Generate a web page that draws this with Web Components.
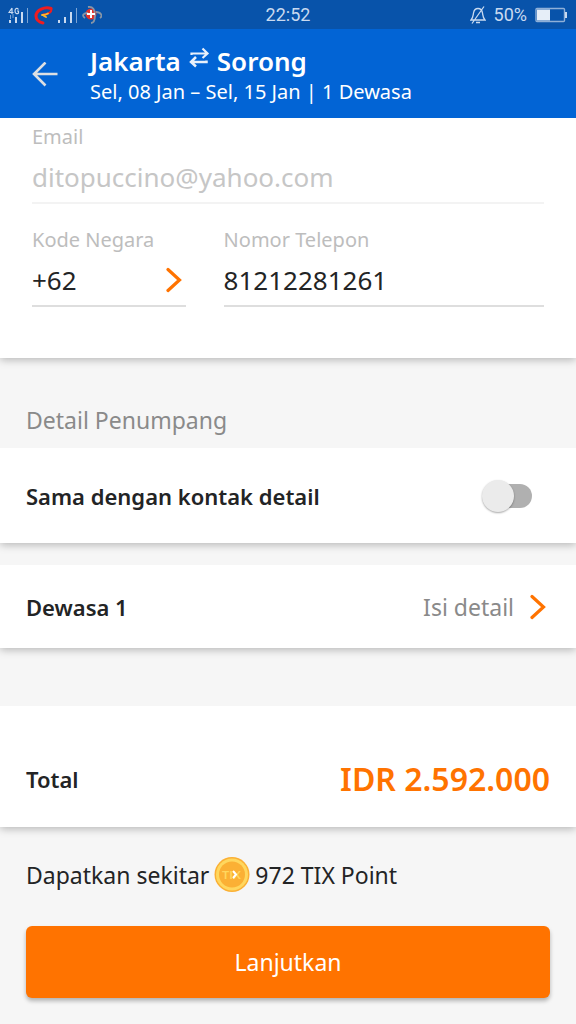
<!DOCTYPE html>
<html lang="id">
<head>
<meta charset="utf-8">
<meta name="viewport" content="width=device-width, initial-scale=1">
<title>Detail Pemesanan</title>
<style>
  html { background: #f6f6f6; }
  body { margin: 0; font-family: "Noto Sans", sans-serif; color: #232425; }
  .phone-row { display: grid; grid-template-columns: minmax(0, 30%) minmax(0, 1fr); column-gap: 38px; margin-top: 22px; }
</style>
</head>
<body>
<status-bar time="22:52" battery="50"></status-bar>
<trip-header>
  <span slot="from">Jakarta</span>
  <span slot="to">Sorong</span>
  <span slot="info">Sel, 08 Jan – Sel, 15 Jan | 1 Dewasa</span>
</trip-header>
<main>
  <sheet-card kind="form">
    <text-field label="Email" type="email" value="ditopuccino@yahoo.com" muted></text-field>
    <div class="phone-row">
      <country-field label="Kode Negara" value="+62"></country-field>
      <text-field label="Nomor Telepon" type="tel" value="81212281261"></text-field>
    </div>
  </sheet-card>
  <section-title>Detail Penumpang</section-title>
  <sheet-card kind="switch"><switch-row>Sama dengan kontak detail</switch-row></sheet-card>
  <sheet-card kind="passenger"><passenger-row>Dewasa 1<span slot="action">Isi detail</span></passenger-row></sheet-card>
  <sheet-card kind="total"><total-row>Total<span slot="price">IDR 2.592.000</span></total-row></sheet-card>
</main>
<checkout-footer>
  <span slot="before">Dapatkan sekitar</span>
  <span slot="after">972 TIX Point</span>
  <span slot="submit">Lanjutkan</span>
</checkout-footer>

<script>
const CHEVRON = `<svg class="chevron" viewBox="0 0 16 26" width="16" height="26" aria-hidden="true"><path d="M2 2.500 13.500 13 2 23.500" fill="none" stroke="#ff7300" stroke-width="3.2" stroke-linecap="round" stroke-linejoin="miter"/></svg>`;

function define(name, render) {
  customElements.define(name, class extends HTMLElement {
    connectedCallback() {
      if (this.shadowRoot) return;
      const root = this.attachShadow({ mode: "open" });
      root.innerHTML = `<style>*{box-sizing:border-box}</style>` + render(this);
    }
  });
}

define("status-bar", el => `
<style>
  :host { display: grid; grid-template-columns: 1fr auto 1fr; align-items: center; height: 29px; padding: 0 8px; background: #0853aa; color: #c9daf0; font: 18px/28px Roboto, sans-serif; }
  svg { display: block; }
  .right { display: flex; justify-content: flex-end; align-items: center; gap: 8px; }
</style>
<svg width="94" height="28" viewBox="0 0 94 28" aria-hidden="true">
  <g fill="none" stroke="#c9daf0" stroke-width="1.2"><path d="M4 7 1 11.500h4.500M4 7v6M10.500 8.500C9 6.500 7 7.500 7 10s2 3.500 3.500 2v-2h-1.500"/><path d="M2.500 14v4M5 13v4" stroke-width="1" opacity=".6"/></g>
  <g fill="#c9daf0"><path d="M1 19h2v3H1zM7 16h2v6H7zM13 11h2v11h-2zM50 19h2v3h-2zM56 16h2v6h-2zM62 11h2v11h-2z"/><path d="M19 7h1v15h-1zM68 7h1v15h-1z" opacity=".6"/></g>
  <g fill="none" stroke-linecap="round"><path d="M43 7.500C37 5 28 9 28 15c0 4 3 6 7 7" stroke="#f01c20" stroke-width="3"/><path d="M43.500 8c0 3-3 5-8 5.500" stroke="#f01c20" stroke-width="2"/><path d="M40 12.500c-2 1.500-4 1.500-6 1.500M36 15l2 1" stroke="#ffb52c" stroke-width="1.800"/></g>
  <circle cx="83" cy="13" r="5.500" fill="#e3322b"/>
  <g fill="none" stroke="#8795a6" stroke-width="1.800"><path d="M80 6c5-1 7 3 7 8s-1 8-4 8M77 17c-4-3-1-5 3-5M88 11c5 0 7 4 4 6"/></g>
  <path d="M82 9h2v3h3v2h-3v3h-2v-3h-3v-2h3z" fill="#fff"/>
</svg>
<span>${el.getAttribute("time")}</span>
<div class="right">
  <svg width="16" height="18" viewBox="0 0 16 18" fill="none" stroke="#c9daf0" stroke-width="1.300" aria-hidden="true"><path d="M1 14c2-2 2-4 2.500-7 .5-3 2-4.500 4.500-4.500S12 4 12.500 7c.5 3 .5 5 2.500 7zM6 16.500h4M14 .5 2 17.500"/></svg>
  <span>${el.getAttribute("battery")}%</span>
  <svg width="33" height="16" viewBox="0 0 33 16" aria-hidden="true"><rect x="1" y="1.500" width="28.500" height="13" rx="1" fill="none" stroke="#8fb0d8" stroke-width="1.400"/><path d="M2 2.500h13v11H2z" fill="#e6eef8"/><path d="M30 5h2v6h-2z" fill="#c9daf0"/></svg>
</div>`);

define("trip-header", () => `
<style>
  :host { display: flex; align-items: center; gap: 32px; padding: 15px 32px 12px; background: #0264d5; color: #fff; }
  button { display: flex; padding: 0; border: 0; background: none; }
  h1 { display: flex; gap: 6px; margin: 0; font-size: 26px; line-height: 34px; font-weight: 600; }
  p { margin: 0; font-size: 20px; line-height: 28px; }
</style>
<button type="button" aria-label="Kembali"><svg width="26" height="26" viewBox="0 0 26 26" fill="none" stroke="#dcdfe3" stroke-width="2.600"><path d="M25.500 12H2.500M13.500 .5 2 12l11.500 11.500"/></svg></button>
<div>
  <h1><slot name="from"></slot><svg width="24" height="28" viewBox="0 0 24 28" fill="none" stroke="#e8f0fb" stroke-width="2.200" aria-hidden="true"><path d="M4.500 11V9.500H20M15.500 4.500l5 5-5 4.500"/><path d="M19.500 16.500V18H4M9 13l-5 5 5 4.500" stroke-width="2.500"/></svg><slot name="to"></slot></h1>
  <p><slot name="info"></slot></p>
</div>`);

define("sheet-card", () => `
<style>
  :host { display: block; background: #fff; box-shadow: 0 2px 8px rgba(0,0,0,.26); clip-path: inset(0 0 -16px 0); }
  :host([kind=form]) { padding: 5px 32px 51px; }
  :host([kind=switch]) { padding: 24px 44px 23px 26px; margin-bottom: 22px; }
  :host([kind=passenger]) { padding: 20px 30px 19px 26px; margin-bottom: 58px; }
  :host([kind=total]) { padding: 49px 26px 24px; }
</style><slot></slot>`);

const FIELD = `
  :host { display: block; min-width: 0; }
  label { display: block; font-size: 20px; line-height: 28px; color: #bdbdbd; }
  .box { display: flex; align-items: center; margin-top: 8px; padding-bottom: 7px; border-bottom: 2px solid #dedede; }
  input, select { flex: 1; min-width: 0; width: 100%; height: 36px; padding: 0; border: 0; outline: 0; appearance: none; background: none; font: 26px/36px "Noto Sans", sans-serif; color: #232425; }
  :host([muted]) input { color: #c6c6c6; }
  :host([muted]) .box { border-color: #f3f3f3; }`;

define("text-field", el => `
<style>${FIELD}</style>
<label for="field">${el.getAttribute("label")}</label>
<div class="box"><input id="field" type="${el.getAttribute("type")}" value="${el.getAttribute("value")}"></div>`);

define("country-field", el => `
<style>${FIELD} .box { padding-right: 4px; }</style>
<label for="code">${el.getAttribute("label")}</label>
<div class="box"><select id="code"><option>${el.getAttribute("value")}</option></select>${CHEVRON}</div>`);

define("section-title", () => `
<style>
  :host { display: block; padding: 44px 26px 10px; }
  h2 { margin: 0; font-size: 23px; line-height: 36px; font-weight: 400; color: #8a8a8a; }
</style><h2><slot></slot></h2>`);

define("switch-row", () => `
<style>
  :host { display: flex; align-items: center; justify-content: space-between; min-height: 48px; }
  label { font-size: 22px; line-height: 36px; font-weight: 600; }
  input { appearance: none; display: flex; align-items: center; width: 50px; height: 24px; margin: 0; border-radius: 12px; background: linear-gradient(#b0b0b0,#b0b0b0) right / 34px 24px no-repeat; }
  input::before { content: ""; width: 32px; height: 32px; border-radius: 50%; background: #ebebeb; box-shadow: 0 1px 2px rgba(0,0,0,.35); }
  input:checked { justify-content: flex-end; }
</style>
<label for="same"><slot></slot></label><input id="same" type="checkbox" role="switch">`);

define("passenger-row", () => `
<style>
  :host { display: block; }
  button { display: flex; align-items: center; width: 100%; height: 44px; padding: 0; border: 0; background: none; color: inherit; font: 600 22px/36px "Noto Sans", sans-serif; text-align: left; }
  .name { flex: 1; }
  .action { margin-right: 16px; font-size: 23px; font-weight: 400; color: #8a8a8a; }
</style>
<button type="button"><span class="name"><slot></slot></span><span class="action"><slot name="action"></slot></span>${CHEVRON}</button>`);

define("total-row", () => `
<style>
  :host { display: flex; align-items: center; justify-content: space-between; height: 48px; font-size: 22px; line-height: 48px; font-weight: 600; }
  .price { font-size: 32px; color: #ff7300; }
</style>
<span><slot></slot></span><span class="price"><slot name="price"></slot></span>`);

define("checkout-footer", () => `
<style>
  :host { display: block; padding: 30px 26px 26px; font-size: 23px; line-height: 36px; }
  p { display: flex; align-items: center; gap: 5px; margin: 0 0 33px; white-space: nowrap; }
  button { display: block; width: 100%; height: 72px; padding: 0; border: 0; border-radius: 6px; background: #ff7300; box-shadow: 0 3px 4px rgba(0,0,0,.28); color: #fff; font: 23px/36px "Noto Sans", sans-serif; }
</style>
<p><slot name="before"></slot><svg width="36" height="36" viewBox="0 0 36 36"><circle cx="18" cy="17.500" r="17.500" fill="#fbb034"/><circle cx="18" cy="17.500" r="16" fill="#ffd75e"/><circle cx="18" cy="17.500" r="13" fill="#fbb034"/><text x="17.500" y="22" text-anchor="middle" font-family="Lato, sans-serif" font-weight="700" font-size="12" fill="#ffd75e">TIX</text><path d="m19 14 3 3.500-3 3.500" fill="none" stroke="#fff" stroke-width="2"/></svg><slot name="after"></slot></p>
<button type="button"><slot name="submit"></slot></button>`);
</script>
</body>
</html>
